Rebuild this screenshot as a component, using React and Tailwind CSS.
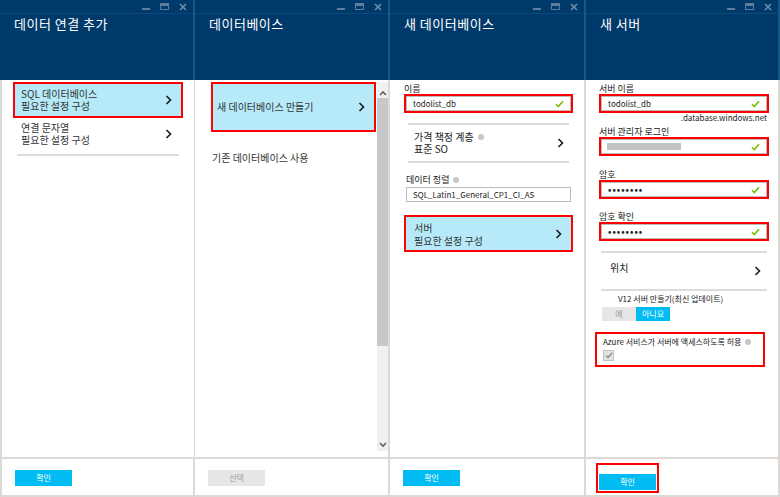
import React from 'react';

const FONT = { fontFamily: '"Noto Sans CJK KR", "Noto Sans", "Liberation Sans", sans-serif' };

const Chevron = () => (
  <svg width="7" height="10" viewBox="0 0 7 10" className="shrink-0">
    <path d="M1.5 1 L5.5 5 L1.5 9" fill="none" stroke="#1a1a1a" strokeWidth="1.6" />
  </svg>
);

const Check = () => (
  <svg width="9" height="8" viewBox="0 0 9 8" className="shrink-0">
    <path d="M1 4.2 L3.3 6.5 L8 1.2" fill="none" stroke="#7fba00" strokeWidth="1.6" />
  </svg>
);

const Info = () => (
  <span className="inline-flex w-[6px] h-[6px] rounded-full bg-[#c8c8c8] ml-[4px] align-middle" />
);

const Header = ({ title }) => (
  <div className="h-[80px] bg-[#003a6b] shrink-0 flex flex-col border-r-2 border-[#17578a]">
    <div className="h-[14px] border-b border-[#0d4a7c] flex items-center justify-end gap-[10px] pr-[6px]">
      <span className="w-[8px] h-[2px] bg-[#5d7f9f] mt-[4px]" />
      <span className="w-[9px] h-[7px] border-[1.5px] border-t-[3px] border-[#5d7f9f]" />
      <svg width="8" height="8" viewBox="0 0 8 8">
        <path d="M1 1 L7 7 M7 1 L1 7" stroke="#6d8dab" strokeWidth="1.6" />
      </svg>
    </div>
    <div className="px-[14px] pt-[1px] text-white text-[13px] leading-[18px] tracking-[0.5px]">{title}</div>
  </div>
);

const Footer = ({ label, disabled, outlined, left }) => (
  <div
    className={`h-[40px] shrink-0 border-t-2 border-r-2 border-b-2 border-[#dcd9d6] flex items-center px-[13px] pt-[1px] ${left ? 'border-l-2' : ''}`}
  >
    {outlined ? (
      <div className="border-2 border-[#ff0000] p-[1px] -ml-[3px]">
        <button className="w-[57px] h-[16px] bg-[#00bcf2] text-white text-[8px] leading-[16px]">{label}</button>
      </div>
    ) : (
      <button
        className={`w-[57px] h-[16px] text-[8px] leading-[16px] ${disabled ? 'bg-[#e6e6e6] text-[#a0a0a0]' : 'bg-[#00bcf2] text-white'}`}
      >
        {label}
      </button>
    )}
  </div>
);

const Field = ({ label, info, children, className = '' }) => (
  <div className={className}>
    <div className="text-[9px] leading-[11px] text-[#222] flex items-center">
      {label}
      {info && <Info />}
    </div>
    {children}
  </div>
);

const Input = ({ children, red, check = true }) => (
  <div className={red ? 'border-2 border-[#ff0000]' : 'mt-[2px]'}>
    <div className="h-[15px] border border-[#bdbdbd] bg-white flex items-center justify-between px-[6px] text-[8px] text-[#222]">
      <span className="flex items-center">{children}</span>
      {check && <Check />}
    </div>
  </div>
);

const Dots = () => <span className="tracking-[1px] text-[9px] font-bold leading-none">••••••••</span>;

export default function App() {
  return (
    <div className="w-[780px] h-[497px] flex bg-white overflow-hidden" style={FONT}>
      {/* 데이터 연결 추가 */}
      <div className="w-[195px] flex flex-col">
        <Header title="데이터 연결 추가" />
        <div className="flex-1 border-l-2 border-r border-[#dcd9d6] px-[11px] pt-[2px] text-[10px] leading-[12px] text-[#333]">
          <div className="h-[36px] border-2 border-[#ff0000] bg-[#b6eaf8] flex items-center justify-between pl-[6px] pr-[9px]">
            <div>SQL 데이터베이스<br />필요한 설정 구성</div>
            <Chevron />
          </div>
          <div className="h-[32px] flex items-center justify-between pl-[8px] pr-[11px]">
            <div>연결 문자열<br />필요한 설정 구성</div>
            <Chevron />
          </div>
          <div className="h-[2px] bg-[#dcdcdc] mx-[4px] mt-[4px]" />
        </div>
        <Footer label="확인" left />
      </div>

      {/* 데이터베이스 */}
      <div className="w-[195px] flex flex-col">
        <Header title="데이터베이스" />
        <div className="flex-1 flex min-h-0 border-r-2 border-[#dcd9d6] text-[10px] leading-[12px] text-[#333]">
          <div className="flex-1 pl-[16px] pr-[1px] pt-[2px]">
            <div className="h-[50px] border-2 border-[#ff0000] bg-[#b6eaf8] flex items-center justify-between pl-[4px] pr-[9px]">
              <span>새 데이터베이스 만들기</span>
              <Chevron />
            </div>
            <div className="pt-[20px] pl-[1px]">기존 데이터베이스 사용</div>
          </div>
          <div className="w-[11px] bg-[#f0f0f0] flex flex-col items-center mt-[2px] mb-[6px]">
            <svg width="8" height="6" viewBox="0 0 8 6" className="mt-[8px]">
              <path d="M1 5 L4 2 L7 5" fill="none" stroke="#606060" strokeWidth="1.6" />
            </svg>
            <div className="w-[11px] h-[248px] bg-[#c8c8c8] mt-[2px]" />
            <div className="flex-1" />
            <svg width="8" height="6" viewBox="0 0 8 6" className="mb-[3px]">
              <path d="M1 1 L4 4 L7 1" fill="none" stroke="#606060" strokeWidth="1.6" />
            </svg>
          </div>
        </div>
        <Footer label="선택" disabled />
      </div>

      {/* 새 데이터베이스 */}
      <div className="w-[196px] flex flex-col">
        <Header title="새 데이터베이스" />
        <div className="flex-1 border-r-2 border-[#dcd9d6] pl-[14px] pr-[11px] pt-[3px] text-[#222]">
          <Field label="이름">
            <Input red>todolist_db</Input>
          </Field>
          <div className="h-[2px] bg-[#dcdcdc] mx-[4px] mt-[10px]" />
          <div className="h-[36px] flex items-center justify-between pl-[10px] pr-[9px] text-[10px] leading-[12px]">
            <div>
              <div className="flex items-center">가격 책정 계층<Info /></div>
              <div>표준 SO</div>
            </div>
            <Chevron />
          </div>
          <div className="h-[2px] bg-[#dcdcdc] mx-[4px]" />
          <Field label="데이터 정렬" info className="mt-[11px] px-[2px]">
            <Input check={false}>SQL_Latin1_General_CP1_CI_AS</Input>
          </Field>
          <div className="mt-[13px] h-[37px] border-2 border-[#ff0000] bg-[#b6eaf8] flex items-center justify-between pl-[8px] pr-[9px] text-[10px] leading-[13px] text-[#333]">
            <div>서버<br />필요한 설정 구성</div>
            <Chevron />
          </div>
        </div>
        <Footer label="확인" />
      </div>

      {/* 새 서버 */}
      <div className="w-[194px] flex flex-col">
        <Header title="새 서버" />
        <div className="flex-1 border-r-2 border-[#dcd9d6] pl-[13px] pr-[9px] pt-[3px] text-[#222]">
          <Field label="서버 이름">
            <Input red>todolist_db</Input>
          </Field>
          <div className="text-right text-[8px] leading-[10px] pr-[2px]">.database.windows.net</div>
          <Field label="서버 관리자 로그인" className="mt-[3px]">
            <Input red>
              <span className="w-[74px] h-[7px] bg-[#c4c4c4] -ml-[1px]" />
            </Input>
          </Field>
          <Field label="암호" className="mt-[13px]">
            <Input red><Dots /></Input>
          </Field>
          <Field label="암호 확인" className="mt-[12px]">
            <Input red><Dots /></Input>
          </Field>
          <div className="h-[2px] bg-[#dcdcdc] mx-[2px] mt-[10px]" />
          <div className="h-[36px] flex items-center justify-between pl-[11px] pr-[8px] text-[10px]">
            <span className="-mt-[8px]">위치</span>
            <Chevron />
          </div>
          <div className="h-[2px] bg-[#dcdcdc] mx-[2px]" />
          <div className="text-[8px] leading-[10px] pl-[19px] mt-[3px]">V12 서버 만들기(최신 업데이트)</div>
          <div className="flex mt-[3px] ml-[3px] text-[8px] leading-[14px]">
            <span className="w-[34px] h-[14px] bg-[#e6e6e6] text-[#9a9a9a] text-center">예</span>
            <span className="w-[34px] h-[14px] bg-[#00bcf2] text-white text-center">아니요</span>
          </div>
          <div className="mt-[11px] -ml-[4px] mr-[4px] border-2 border-[#ff0000] h-[35px] px-[6px] pt-[3px]">
            <div className="text-[8px] leading-[10px] flex items-center">
              Azure 서비스가 서버에 액세스하도록 허용<Info />
            </div>
            <div className="w-[11px] h-[11px] bg-[#e3e3e3] border border-[#c0c0c0] mt-[3px] flex items-center justify-center">
              <svg width="8" height="7" viewBox="0 0 8 7">
                <path d="M1 3.5 L3 5.5 L7 1" fill="none" stroke="#8a8a8a" strokeWidth="1.4" />
              </svg>
            </div>
          </div>
        </div>
        <Footer label="확인" outlined />
      </div>
    </div>
  );
}
